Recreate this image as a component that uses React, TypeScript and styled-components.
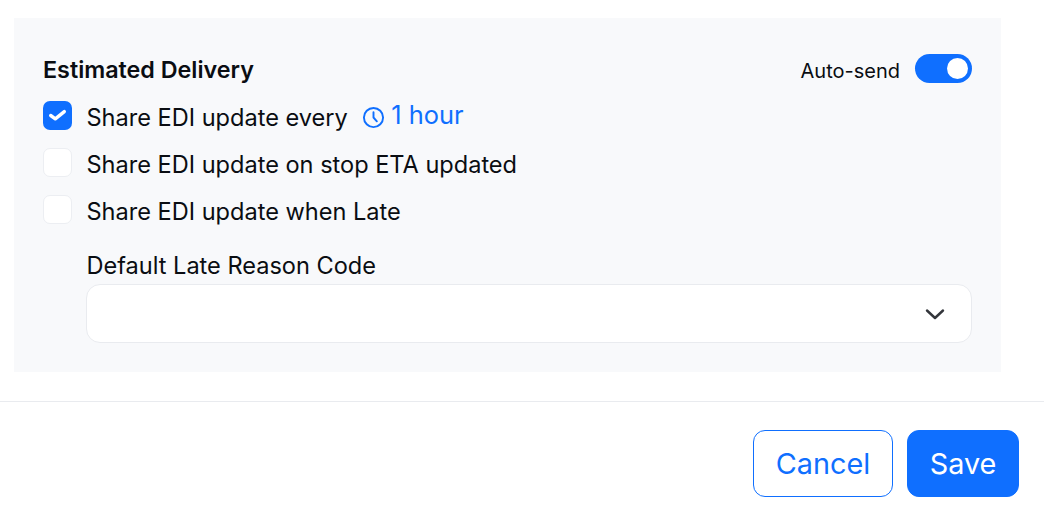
import React from 'react'
import styled, { createGlobalStyle } from 'styled-components'

const GlobalStyle = createGlobalStyle`
  html, body {
    margin: 0;
    padding: 0;
    background: #ffffff;
    font-family: Inter, "Liberation Sans", sans-serif;
    color: #0a0d12;
  }
`

const Page = styled.div`
  width: 1044px;
  height: 522px;
  padding-top: 18px;
  box-sizing: border-box;
  overflow: hidden;
`

const Panel = styled.section`
  width: 987px;
  height: 354px;
  margin-left: 14px;
  padding: 36px 29px 0;
  box-sizing: border-box;
  background: #f8f9fb;
`

const HeaderRow = styled.div`
  display: flex;
  justify-content: space-between;
  align-items: flex-start;
  height: 47px;
`

const Heading = styled.h2`
  margin: 0;
  font-size: 23.3px;
  line-height: 32px;
  font-weight: 600;
`

const AutoSend = styled.div`
  display: flex;
  align-items: flex-start;
  gap: 15px;
`

const AutoSendLabel = styled.span`
  font-size: 20px;
  line-height: 29px;
  margin-top: 3px;
`

const Toggle = styled.span`
  position: relative;
  display: block;
  width: 57px;
  height: 29px;
  border-radius: 15px;
  background: #0f6fff;

  &::after {
    content: '';
    position: absolute;
    top: 4px;
    right: 4px;
    width: 21px;
    height: 21px;
    border-radius: 50%;
    background: #ffffff;
  }
`

const OptionList = styled.div`
  display: flex;
  flex-direction: column;
  gap: 18px;
`

const Option = styled.label`
  display: flex;
  align-items: center;
  gap: 14.5px;
  height: 29px;
`

const CheckBox = styled.span<{ $checked?: boolean }>`
  display: flex;
  align-items: center;
  justify-content: center;
  width: 29px;
  height: 29px;
  box-sizing: border-box;
  border-radius: 7px;
  background: ${({ $checked }) => ($checked ? '#0f6fff' : '#ffffff')};
  border: ${({ $checked }) => ($checked ? 'none' : '1px solid #eceef2')};
`

const OptionText = styled.span`
  font-size: 23.55px;
  line-height: 29px;
  margin-top: 3px;
`

const Interval = styled.span`
  display: inline-flex;
  align-items: center;
  gap: 6px;
  margin-top: -3px;
  color: #0f6fff;
  font-size: 25.4px;
  line-height: 29px;
`

const ClockIcon = styled.svg`
  margin-top: 6px;
`

const ReasonField = styled.div`
  margin: 27px 0 0 43px;
`

const FieldLabel = styled.div`
  padding-left: 0.5px;
  font-size: 23.55px;
  line-height: 29px;
  margin-bottom: 4px;
`

const Select = styled.div`
  display: flex;
  align-items: center;
  justify-content: flex-end;
  height: 59px;
  box-sizing: border-box;
  padding-right: 24px;
  background: #ffffff;
  border: 1px solid #e9ebef;
  border-radius: 14px;
  color: #33363b;
`

const Divider = styled.hr`
  margin: 29px 0 0;
  border: none;
  border-top: 1px solid #e9ebef;
`

const Footer = styled.footer`
  display: flex;
  justify-content: flex-end;
  gap: 14px;
  padding: 28px 25px 0 0;
`

const Button = styled.button<{ $primary?: boolean }>`
  width: ${({ $primary }) => ($primary ? '112px' : '140px')};
  height: 67px;
  padding: 0;
  box-sizing: border-box;
  border-radius: 12px;
  border: 1px solid #0f6fff;
  background: ${({ $primary }) => ($primary ? '#0f6fff' : '#ffffff')};
  color: ${({ $primary }) => ($primary ? '#ffffff' : '#0f6fff')};
  font-family: inherit;
  font-size: 28.8px;
  font-weight: 400;
`

export default function App() {
  return (
    <Page>
      <GlobalStyle />
      <Panel>
        <HeaderRow>
          <Heading>Estimated Delivery</Heading>
          <AutoSend>
            <AutoSendLabel>Auto-send</AutoSendLabel>
            <Toggle />
          </AutoSend>
        </HeaderRow>
        <OptionList>
          <Option>
            <CheckBox $checked>
              <svg width="19" height="15" viewBox="0 0 19 15" fill="none">
                <path d="M2.7 7.5L7.3 10.8L16.3 3.6" stroke="#fff" strokeWidth="3.4" strokeLinecap="round" strokeLinejoin="round" />
              </svg>
            </CheckBox>
            <OptionText>Share EDI update every</OptionText>
            <Interval>
              <ClockIcon width="23" height="23" viewBox="0 0 24 24" fill="none" stroke="currentColor" strokeWidth="2" strokeLinecap="round" strokeLinejoin="round">
                <circle cx="12" cy="12" r="10" />
                <path d="M12 6.5V12L15.5 16" />
              </ClockIcon>
              1 hour
            </Interval>
          </Option>
          <Option>
            <CheckBox />
            <OptionText>Share EDI update on stop ETA updated</OptionText>
          </Option>
          <Option>
            <CheckBox />
            <OptionText>Share EDI update when Late</OptionText>
          </Option>
        </OptionList>
        <ReasonField>
          <FieldLabel>Default Late Reason Code</FieldLabel>
          <Select>
            <svg width="24" height="24" viewBox="0 0 24 24" fill="none" stroke="currentColor" strokeWidth="2.4" strokeLinecap="round" strokeLinejoin="round">
              <path d="M4 8.5L12 16L20 8.5" />
            </svg>
          </Select>
        </ReasonField>
      </Panel>
      <Divider />
      <Footer>
        <Button>Cancel</Button>
        <Button $primary>Save</Button>
      </Footer>
    </Page>
  )
}
